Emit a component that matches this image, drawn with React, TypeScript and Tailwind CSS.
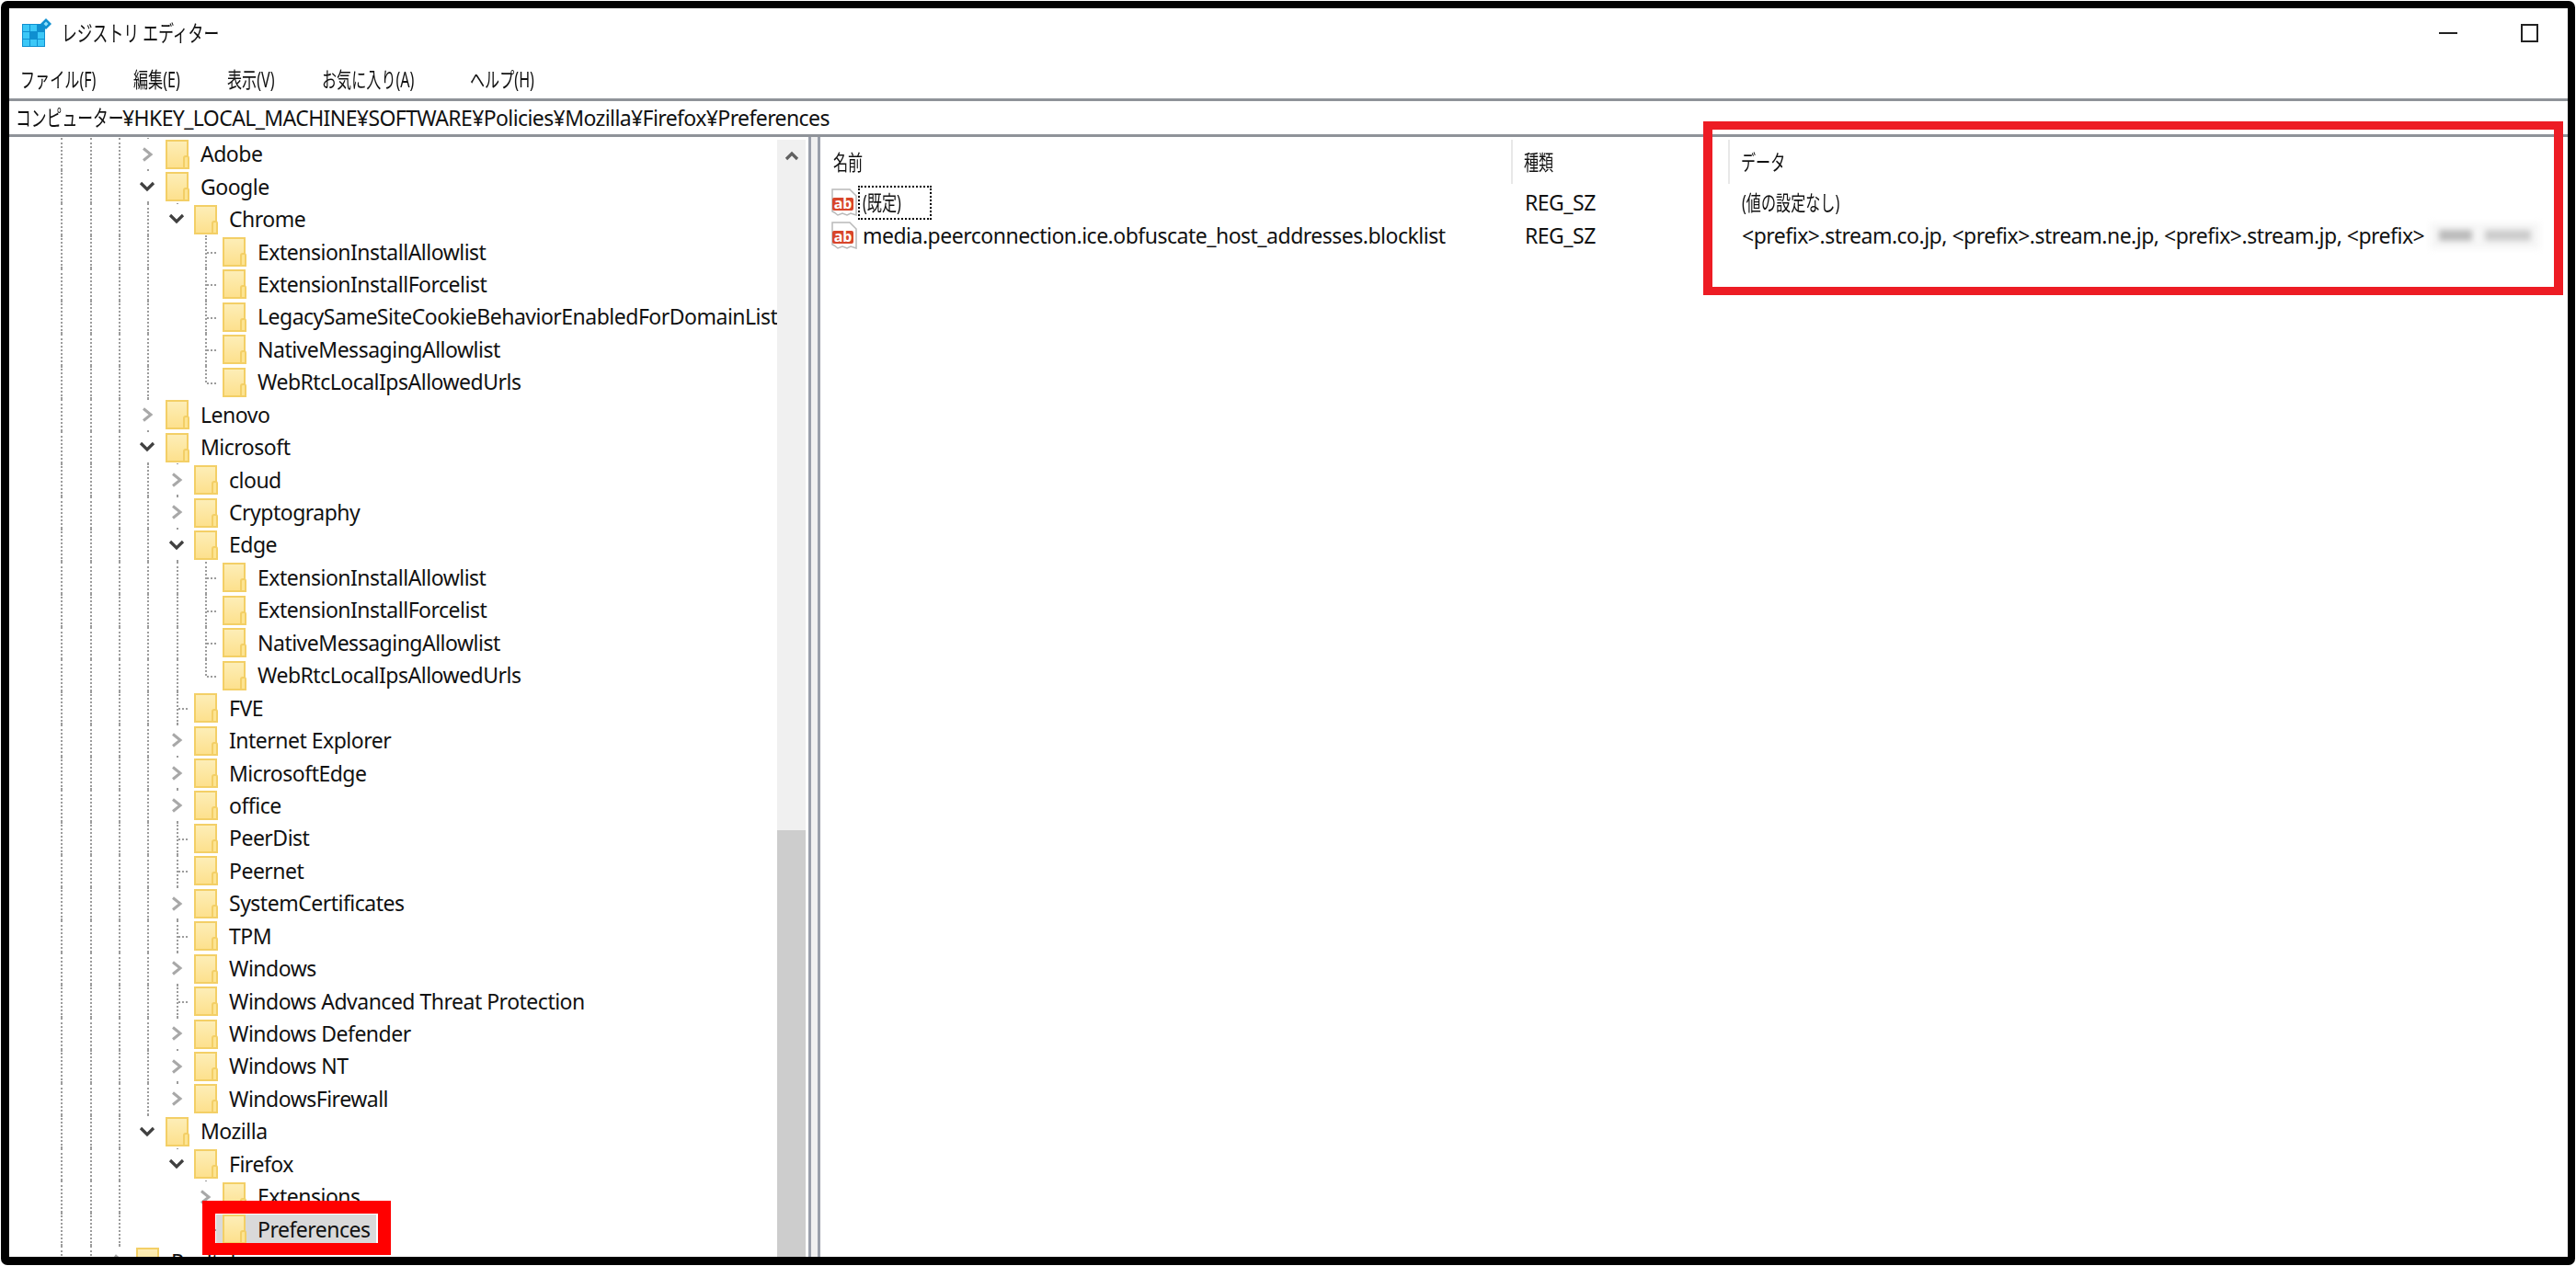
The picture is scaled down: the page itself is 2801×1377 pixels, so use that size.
import type { ReactNode } from 'react';

type NodeState = 'open' | 'closed' | 'leaf';

interface TreeRow {
  label: string;
  depth: 0 | 1 | 2 | 3;
  state: NodeState;
}

const ROWS: TreeRow[] = [
  { label: 'Adobe', depth: 1, state: 'closed' },
  { label: 'Google', depth: 1, state: 'open' },
  { label: 'Chrome', depth: 2, state: 'open' },
  { label: 'ExtensionInstallAllowlist', depth: 3, state: 'leaf' },
  { label: 'ExtensionInstallForcelist', depth: 3, state: 'leaf' },
  { label: 'LegacySameSiteCookieBehaviorEnabledForDomainList', depth: 3, state: 'leaf' },
  { label: 'NativeMessagingAllowlist', depth: 3, state: 'leaf' },
  { label: 'WebRtcLocalIpsAllowedUrls', depth: 3, state: 'leaf' },
  { label: 'Lenovo', depth: 1, state: 'closed' },
  { label: 'Microsoft', depth: 1, state: 'open' },
  { label: 'cloud', depth: 2, state: 'closed' },
  { label: 'Cryptography', depth: 2, state: 'closed' },
  { label: 'Edge', depth: 2, state: 'open' },
  { label: 'ExtensionInstallAllowlist', depth: 3, state: 'leaf' },
  { label: 'ExtensionInstallForcelist', depth: 3, state: 'leaf' },
  { label: 'NativeMessagingAllowlist', depth: 3, state: 'leaf' },
  { label: 'WebRtcLocalIpsAllowedUrls', depth: 3, state: 'leaf' },
  { label: 'FVE', depth: 2, state: 'leaf' },
  { label: 'Internet Explorer', depth: 2, state: 'closed' },
  { label: 'MicrosoftEdge', depth: 2, state: 'closed' },
  { label: 'office', depth: 2, state: 'closed' },
  { label: 'PeerDist', depth: 2, state: 'leaf' },
  { label: 'Peernet', depth: 2, state: 'leaf' },
  { label: 'SystemCertificates', depth: 2, state: 'closed' },
  { label: 'TPM', depth: 2, state: 'leaf' },
  { label: 'Windows', depth: 2, state: 'closed' },
  { label: 'Windows Advanced Threat Protection', depth: 2, state: 'leaf' },
  { label: 'Windows Defender', depth: 2, state: 'closed' },
  { label: 'Windows NT', depth: 2, state: 'closed' },
  { label: 'WindowsFirewall', depth: 2, state: 'closed' },
  { label: 'Mozilla', depth: 1, state: 'open' },
  { label: 'Firefox', depth: 2, state: 'open' },
  { label: 'Extensions', depth: 3, state: 'closed' },
  { label: 'Preferences', depth: 3, state: 'leaf' },
  { label: 'Realtek', depth: 0, state: 'closed' },
];

const ROW_INDENT = ['ml-[131px]', 'ml-[163px]', 'ml-[194px]', 'ml-[225px]'];
const CHEVRON_LEFT = ['left-[107px]', 'left-[138px]', 'left-[170px]', 'left-[201px]'];
const HOOK_LEFT = ['left-[121px]', 'left-[152px]', 'left-[184px]', 'left-[215px]'];

// which connector lines run through a row, and whether they stop half way
function guidesFor(i: number): { cls: string; half?: boolean }[] {
  const out: { cls: string; half?: boolean }[] = [
    { cls: 'left-[56px]' },
    { cls: 'left-[88px]' },
    { cls: 'left-[119px]', half: i === 34 },
  ];
  if (i <= 30) out.push({ cls: 'left-[150px]', half: i === 30 });
  if (i === 2 || i === 31) out.push({ cls: 'left-[182px]', half: true });
  if (i >= 10 && i <= 29) out.push({ cls: 'left-[182px]', half: i === 29 });
  if ((i >= 3 && i <= 7) || (i >= 13 && i <= 16) || i === 32 || i === 33) {
    out.push({ cls: 'left-[213px]', half: i === 7 || i === 16 || i === 33 });
  }
  return out;
}

function Folder() {
  return (
    <svg width="26" height="32" viewBox="0 0 26 32" className="shrink-0">
      <defs>
        <linearGradient id="folderFill" x1="0" y1="0" x2="0" y2="1">
          <stop offset="0" stopColor="#fdeeb8" />
          <stop offset="1" stopColor="#fde08c" />
        </linearGradient>
      </defs>
      <rect x="1" y="1" width="23" height="30" fill="url(#folderFill)" stroke="#f3cf66" strokeWidth="2" />
      <path d="M20 31V20q0-2 2-2h1.500q1.500 0 1.500 2v11z" fill="#fde492" stroke="#f3cf66" strokeWidth="2" />
    </svg>
  );
}

function Chevron({ open }: { open: boolean }) {
  return open ? (
    <svg width="18" height="12" viewBox="0 0 18 12">
      <path d="M2 2l7 7 7-7" fill="none" stroke="#404040" strokeWidth="3.200" />
    </svg>
  ) : (
    <svg width="13" height="16" viewBox="0 0 13 16">
      <path d="M2 1.500l8 6.500-8 6.500" fill="none" stroke="#a8a8a8" strokeWidth="3" />
    </svg>
  );
}

function ValueIcon() {
  return (
    <svg width="31" height="31" viewBox="0 0 31 31" className="shrink-0">
      <path
        d="M3 1h19l7 7v21l-6-2-4 2-5-2-5 2-4-3-2-1z"
        fill="#fff"
        stroke="#b9b9b9"
        strokeWidth="1.500"
      />
      <rect x="3" y="10" width="23" height="14" rx="2" fill="#d8452a" />
      <text
        x="14.500"
        y="22"
        textAnchor="middle"
        fontSize="16"
        fontWeight="700"
        fill="#fff"
        fontFamily="'Noto Sans', sans-serif"
      >
        ab
      </text>
    </svg>
  );
}

function Row({ row, index }: { row: TreeRow; index: number }) {
  const selected = row.label === 'Preferences';
  return (
    <div className="relative flex h-[35.45px] items-center">
      {guidesFor(index).map((g) => (
        <div
          key={g.cls}
          className={`absolute top-0 w-0 border-l-2 border-dotted border-[#9c9c9c] ${g.cls} ${
            g.half ? 'h-1/2' : 'h-full'
          }`}
        />
      ))}
      {row.state === 'leaf' ? (
        <div
          className={`absolute top-1/2 h-0 w-[10px] border-t-2 border-dotted border-[#9c9c9c] ${HOOK_LEFT[row.depth]}`}
        />
      ) : (
        <div
          className={`absolute top-px flex h-[33px] w-[24px] items-center justify-center bg-white ${CHEVRON_LEFT[row.depth]}`}
        >
          <Chevron open={row.state === 'open'} />
        </div>
      )}
      <div
        className={`relative flex h-[33px] items-center gap-[12px] pl-[7px] pr-[6px] ${ROW_INDENT[row.depth]} ${
          selected ? 'bg-[#d9d9d9]' : ''
        }`}
      >
        <Folder />
        <span className="whitespace-nowrap tracking-[-0.5px]">{row.label}</span>
      </div>
    </div>
  );
}

function Jp({ children, className = '' }: { children: ReactNode; className?: string }) {
  return (
    <span className={`inline-block origin-left scale-x-[0.7] whitespace-nowrap ${className}`}>{children}</span>
  );
}

export default function App() {
  return (
    <div className="relative flex h-[1377px] w-[2801px] flex-col bg-white text-[23px] leading-none text-[#111] font-['Noto_Sans','Noto_Sans_CJK_JP',sans-serif]">
      <div className="m-px mb-[1px] flex min-h-0 flex-1 flex-col rounded-[7px] bg-black pb-[9px] pl-[9px] pr-[8px] pt-[8px]">
        <div className="flex min-h-0 flex-1 flex-col overflow-hidden bg-white">
          {/* title bar */}
          <div className="flex h-[56px] shrink-0 items-center pb-[2px]">
            <svg width="34" height="32" viewBox="0 0 34 32" className="ml-[13px] mr-[10px] shrink-0">
              <rect x="1" y="6" width="25" height="25" fill="#0f8fd0" />
              <path
                d="M2 7h7v7H2zM10 7h7v7h-7zM2 15h7v7H2zM18 15h7v7h-7zM10 23h7v7h-7zM2 23h7v7H2zM18 23h7v7h-7z"
                fill="#3cc8f7"
              />
              <path d="M27 0l6 6-6 6-6-6z" fill="#0f8fd0" />
              <path d="M27 3.500l2.500 2.500-2.500 2.500-2.500-2.500z" fill="#8be0fb" />
            </svg>
            <Jp className="text-[24px]">レジストリ エディター</Jp>
            <div className="ml-auto flex items-center">
              <div className="h-[2px] w-[20px] bg-[#222]" />
              <div className="ml-[69px] mr-[32px] h-[20px] w-[19px] border-2 border-[#222]" />
            </div>
          </div>
          {/* menu */}
          <div className="flex h-[42px] shrink-0 items-center pl-[12px] text-[23px]">
            <div className="w-[123px]">
              <Jp>ファイル(F)</Jp>
            </div>
            <div className="w-[102px]">
              <Jp>編集(E)</Jp>
            </div>
            <div className="w-[103px]">
              <Jp>表示(V)</Jp>
            </div>
            <div className="w-[161px]">
              <Jp>お気に入り(A)</Jp>
            </div>
            <div>
              <Jp>ヘルプ(H)</Jp>
            </div>
          </div>
          {/* address bar */}
          <div className="flex h-[42px] shrink-0 items-center border-y-[3px] border-[#8f9399] pl-[7px]">
            <span className="w-[116px] shrink-0">
              <Jp className="text-[24px]">コンピューター</Jp>
            </span>
            <span className="whitespace-nowrap tracking-[-0.6px]">
              ¥HKEY_LOCAL_MACHINE¥SOFTWARE¥Policies¥Mozilla¥Firefox¥Preferences
            </span>
          </div>
          {/* panes */}
          <div className="flex min-h-0 flex-1">
            <div className="flex w-[869px] shrink-0 pt-[1px]">
              <div className="min-w-0 flex-1 overflow-hidden">
                {ROWS.map((row, i) => (
                  <Row key={i} row={row} index={i} />
                ))}
              </div>
              <div className="mr-[3px] mt-[2px] flex w-[31px] shrink-0 flex-col justify-between bg-[#f0f0f0]">
                <div className="flex h-[34px] items-center justify-center">
                  <svg width="16" height="11" viewBox="0 0 16 11">
                    <path d="M2 9l6-6 6 6" fill="none" stroke="#606060" strokeWidth="3.200" />
                  </svg>
                </div>
                <div className="h-[464px] bg-[#cdcdcd]" />
              </div>
            </div>
            <div className="w-[13px] shrink-0 border-x-[3px] border-[#9a9fab] bg-[#f0f0f0]" />
            <div className="min-w-0 flex-1 pt-[3px]">
              <div className="flex h-[48px] items-center">
                <div className="flex h-full w-[753px] items-center border-r-2 border-[#e8e8e8] pl-[14px]">
                  <Jp>名前</Jp>
                </div>
                <div className="flex h-full w-[236px] items-center border-r-2 border-[#e8e8e8] pl-[12px]">
                  <Jp>種類</Jp>
                </div>
                <div className="pl-[12px]">
                  <Jp>データ</Jp>
                </div>
              </div>
              <div className="mt-[3px] grid grid-cols-[766px_236px_1fr] auto-rows-[35.5px] items-center">
                <div className="flex items-center pl-[10px]">
                  <ValueIcon />
                  <div className="flex h-[37px] w-[80px] items-center border-2 border-dotted border-black pl-[3px]">
                    <Jp>(既定)</Jp>
                  </div>
                </div>
                <div className="tracking-[-0.5px]">REG_SZ</div>
                <div>
                  <Jp>(値の設定なし)</Jp>
                </div>
                <div className="flex items-center pl-[10px]">
                  <ValueIcon />
                  <span className="ml-[5px] whitespace-nowrap tracking-[-0.5px]">
                    media.peerconnection.ice.obfuscate_host_addresses.blocklist
                  </span>
                </div>
                <div className="tracking-[-0.5px]">REG_SZ</div>
                <div className="flex items-center whitespace-nowrap tracking-[-0.5px]">
                  <span>&lt;prefix&gt;.stream.co.jp, &lt;prefix&gt;.stream.ne.jp, &lt;prefix&gt;.stream.jp, &lt;prefix&gt;</span>
                  <span className="ml-[6px] flex h-[29px] w-[120px] items-center justify-center gap-[14px] overflow-hidden bg-[#f7f7f7] blur-[3px]">
                    <span className="h-[12px] w-[36px] bg-[#bbb]" />
                    <span className="h-[12px] w-[50px] bg-[#ccc]" />
                  </span>
                </div>
              </div>
            </div>
          </div>
        </div>
      </div>
      {/* red annotation boxes drawn over the window */}
      <div className="absolute left-[1852px] top-[132px] h-[189px] w-[935px] border-x-[10px] border-y-[9px] border-[#ed1c24]" />
      <div className="absolute left-[220px] top-[1306px] h-[59px] w-[205px] border-x-[14px] border-b-[13px] border-t-[14px] border-[#ff0000]" />
    </div>
  );
}
